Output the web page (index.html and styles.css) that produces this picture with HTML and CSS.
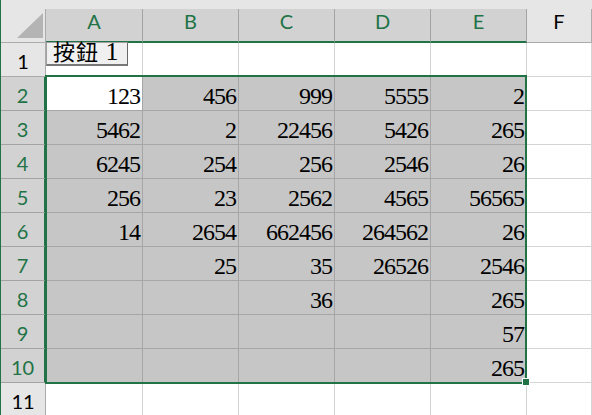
FILE: index.html
```html
<!DOCTYPE html>
<html lang="zh-Hant">
<head>
<meta charset="utf-8">
<title>Sheet</title>
<link rel="stylesheet" href="styles.css">
</head>
<body>
<div class="app">
  <div class="topbar"></div>
  <div class="sheet">
    <div class="corner"><svg class="corner-tri" width="44" height="33" viewBox="0 0 44 33"><polygon points="42,4 16,29 42,29" fill="#b4b4b4"/></svg></div>
    <div class="ch sel">A</div>
    <div class="ch sel">B</div>
    <div class="ch sel">C</div>
    <div class="ch sel">D</div>
    <div class="ch sel">E</div>
    <div class="ch">F</div>

    <div class="rh">1</div>
    <div class="c a1"><div class="btn">按鈕 <span class="btn-num">1</span></div></div>
    <div class="c"></div><div class="c"></div><div class="c"></div><div class="c"></div><div class="c"></div>

    <div class="rh sel">2</div>
    <div class="c s active">123</div><div class="c s">456</div><div class="c s">999</div><div class="c s">5555</div><div class="c s">2</div><div class="c"></div>

    <div class="rh sel">3</div>
    <div class="c s">5462</div><div class="c s">2</div><div class="c s">22456</div><div class="c s">5426</div><div class="c s">265</div><div class="c"></div>

    <div class="rh sel">4</div>
    <div class="c s">6245</div><div class="c s">254</div><div class="c s">256</div><div class="c s">2546</div><div class="c s">26</div><div class="c"></div>

    <div class="rh sel">5</div>
    <div class="c s">256</div><div class="c s">23</div><div class="c s">2562</div><div class="c s">4565</div><div class="c s">56565</div><div class="c"></div>

    <div class="rh sel">6</div>
    <div class="c s">14</div><div class="c s">2654</div><div class="c s">662456</div><div class="c s">264562</div><div class="c s">26</div><div class="c"></div>

    <div class="rh sel">7</div>
    <div class="c s"></div><div class="c s">25</div><div class="c s">35</div><div class="c s">26526</div><div class="c s">2546</div><div class="c"></div>

    <div class="rh sel">8</div>
    <div class="c s"></div><div class="c s"></div><div class="c s">36</div><div class="c s"></div><div class="c s">265</div><div class="c"></div>

    <div class="rh sel">9</div>
    <div class="c s"></div><div class="c s"></div><div class="c s"></div><div class="c s"></div><div class="c s">57</div><div class="c"></div>

    <div class="rh sel">10</div>
    <div class="c s"></div><div class="c s"></div><div class="c s"></div><div class="c s"></div><div class="c s">265</div><div class="c"></div>

    <div class="rh">11</div>
    <div class="c"></div><div class="c"></div><div class="c"></div><div class="c"></div><div class="c"></div><div class="c"></div>

    <div class="selection"></div>
    <div class="fill-handle"></div>
  </div>
</div>
</body>
</html>
```
FILE: styles.css
```css
* { box-sizing: border-box; }
html, body {
  margin: 0;
  padding: 0;
  width: 592px;
  height: 415px;
  overflow: hidden;
  background: #ffffff;
}
.app {
  border-left: 1px solid #217346;
  height: 415px;
  overflow: hidden;
}
.topbar {
  height: 9px;
  background: #e6e6e6;
}
.sheet {
  position: relative;
  display: grid;
  grid-template-columns: 45px 97px 96px 96px 96px 96px 1fr;
  grid-template-rows: repeat(12, 34px);
}
.corner {
  background: #e6e6e6;
  border-right: 1px solid #ababab;
  border-bottom: 1px solid #ababab;
}
.corner-tri { display: block; }
.ch {
  background: #e6e6e6;
  border-right: 1px solid #ababab;
  border-bottom: 1px solid #ababab;
  text-align: center;
  font-family: Lato, "Open Sans", sans-serif;
  font-size: 20px;
  line-height: 24px;
  color: #000000;
}
.ch.sel {
  background: #d2d2d2;
  color: #217346;
  border-right-color: #a3a3a3;
  border-bottom: 2px solid #217346;
}
.rh {
  background: #e6e6e6;
  border-right: 1px solid #ababab;
  border-bottom: 1px solid #ababab;
  text-align: center;
  font-family: Lato, "Open Sans", sans-serif;
  font-size: 20px;
  line-height: 24px;
  padding-top: 6px;
  color: #000000;
}
.rh.sel {
  background: #d2d2d2;
  color: #217346;
  border-bottom-color: #a3a3a3;
  border-right: 2px solid #217346;
}
.c {
  background: #ffffff;
  border-right: 1px solid #d4d4d4;
  border-bottom: 1px solid #d4d4d4;
  text-align: right;
  font-family: "Liberation Serif", "Times New Roman", serif;
  font-size: 24px;
  letter-spacing: -1px;
  line-height: 24px;
  padding: 7px 2px 0 0;
  color: #000000;
  white-space: nowrap;
}
.c.s {
  background: #c6c6c6;
  border-right-color: #a6a6a6;
  border-bottom-color: #a6a6a6;
}
.c.s.active {
  background: #ffffff;
}
.a1 {
  position: relative;
}
.btn {
  position: absolute;
  left: 0;
  top: -1px;
  width: 82px;
  height: 24px;
  background: #f0f0f0;
  border-left: 1px solid #a0a0a0;
  border-top: 1px solid #a0a0a0;
  border-right: 1px solid #696969;
  border-bottom: 2px solid #787878;
  font-family: "Liberation Serif", "Noto Sans CJK TC", serif;
  font-size: 22px;
  line-height: 20px;
  letter-spacing: 1px;
  text-align: left;
  padding-left: 6px;
  color: #000000;
  white-space: nowrap;
}
.btn-num {
  font-size: 26px;
  line-height: 0;
  letter-spacing: 0;
}
.selection {
  position: absolute;
  left: 44px;
  top: 66px;
  width: 482px;
  height: 309px;
  border: 2px solid #217346;
  pointer-events: none;
}
.fill-handle {
  position: absolute;
  left: 521px;
  top: 369px;
  width: 8px;
  height: 8px;
  background: #217346;
  border: 1px solid #ffffff;
}
```
